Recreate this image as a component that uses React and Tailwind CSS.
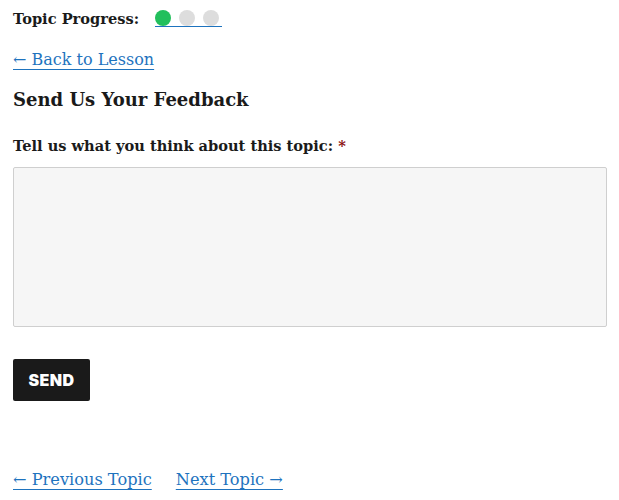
export default function App() {
  const serif = { fontFamily: '"DejaVu Serif", "Liberation Serif", serif' };
  return (
    <div className="bg-white min-h-[500px] px-[13px] text-[#1a1a1a]" style={serif}>
      <div className="flex items-center h-[36px] pt-[1px]">
        <span className="font-bold text-[14.6px]">Topic Progress:</span>
        <a href="#" className="ml-[16px] flex gap-[8px] border-b border-[#1e73be] h-[17px] w-[67px]">
          <span className="w-[16px] h-[16px] rounded-full bg-[#22bf5c]" />
          <span className="w-[16px] h-[16px] rounded-full bg-[#dddddd]" />
          <span className="w-[16px] h-[16px] rounded-full bg-[#dddddd]" />
        </a>
      </div>
      <div className="mt-[12px]">
        <a href="#" className="text-[16px] text-[#1e73be] underline underline-offset-[4px]">
          ← Back to Lesson
        </a>
      </div>
      <h2 className="mt-[14px] text-[18px] font-bold leading-[28px]">Send Us Your Feedback</h2>
      <label className="block mt-[21px] text-[14.6px] font-bold leading-[22px]">
        Tell us what you think about this topic: <span className="text-[#8b0f0f]">*</span>
      </label>
      <textarea className="block mt-[10px] w-[594px] h-[160px] bg-[#f6f6f6] border border-[#cfcfcf] rounded-[2px] resize-none" />
      <button
        className="mt-[32px] w-[77px] h-[42px] bg-[#1a1a1a] text-white rounded-[2px] text-[16px] font-black tracking-[0.4px]"
        style={{ fontFamily: 'Inter, "Liberation Sans", Arial, sans-serif' }}
      >
        SEND
      </button>
      <div className="mt-[67px] flex gap-[24px] text-[16.2px]">
        <a href="#" className="text-[#1e73be] underline underline-offset-[4px]">← Previous Topic</a>
        <a href="#" className="text-[#1e73be] underline underline-offset-[4px]">Next Topic →</a>
      </div>
    </div>
  );
}
